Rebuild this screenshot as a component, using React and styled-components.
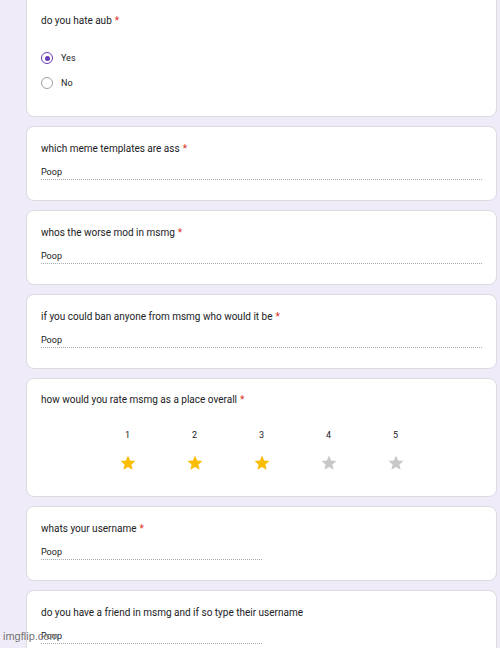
import React from 'react'
import styled, { createGlobalStyle } from 'styled-components'

const GlobalStyle = createGlobalStyle`
html, body {
  margin: 0;
  padding: 0;
  background: #f0ebf8;
  height: 648px;
  overflow: hidden;
}
body {
  font-family: Roboto, "Liberation Sans", sans-serif;
  color: #202124;
}
`

const Page = styled.div`
position: relative;
height: 648px;
overflow: hidden;
`

const CardList = styled.div`
display: flex;
flex-direction: column;
gap: 9px;
margin: -11px 3px 0 26px;
`

const Card = styled.div`
background: #fff;
border: 1px solid #dadce0;
border-radius: 8px;
padding: ${p => p.$padTop || 15}px 14px ${p => p.$padBottom || 20}px 14px;
`

const Title = styled.div`
font-size: 10px;
line-height: 14px;
`

const Required = styled.span`
color: #d93025;
margin-left: 3px;
`

const Answer = styled.div`
margin-top: 10px;
font-size: 9px;
line-height: 12px;
padding-bottom: 1px;
width: ${p => p.$half ? '221px' : '100%'};
border-bottom: 1px dotted #a8a8a8;
`

const Options = styled.div`
display: flex;
flex-direction: column;
gap: 5px;
margin-top: 20px;
`

const Option = styled.div`
display: flex;
align-items: center;
height: 20px;
gap: 8px;
font-size: 9px;
`

const Radio = styled.span`
box-sizing: border-box;
width: 12px;
height: 12px;
border-radius: 50%;
border: 1.5px solid ${p => p.$checked ? '#673ab7' : '#a0a0a0'};
display: flex;
align-items: center;
justify-content: center;
&::after {
  content: '';
  width: 5px;
  height: 5px;
  border-radius: 50%;
  background: ${p => p.$checked ? '#673ab7' : 'transparent'};
}
`

const Rating = styled.div`
display: flex;
justify-content: center;
margin-top: 22px;
`

const RatingCol = styled.div`
width: 67px;
display: flex;
flex-direction: column;
align-items: center;
gap: 13px;
`

const RatingNum = styled.div`
font-size: 9px;
line-height: 12px;
`

const Watermark = styled.div`
position: absolute;
left: 3px;
top: 630px;
font-family: "Liberation Sans", Arial, sans-serif;
font-size: 11px;
color: rgba(70, 70, 70, 0.8);
text-shadow: 0 0 1px #fff;
`

const Star = ({ filled }) => (
  <svg width="18" height="18" viewBox="0 0 24 24">
    <path
      d="M12 17.27L18.18 21l-1.64-7.03L22 9.24l-7.19-.61L12 2 9.19 8.63 2 9.24l5.46 4.73L5.82 21z"
      fill={filled ? '#fbbc04' : '#c8c8c8'}
    />
  </svg>
)

const TextQuestion = ({ title, required, half }) => (
  <Card>
    <Title>
      {title}
      {required && <Required>*</Required>}
    </Title>
    <Answer $half={half}>Poop</Answer>
  </Card>
)

export default function App() {
  return (
    <Page>
      <GlobalStyle />
      <CardList>
        <Card $padTop={24} $padBottom={23}>
          <Title>
            do you hate aub<Required>*</Required>
          </Title>
          <Options>
            <Option>
              <Radio $checked />
              Yes
            </Option>
            <Option>
              <Radio />
              No
            </Option>
          </Options>
        </Card>

        <TextQuestion title="which meme templates are ass" required />
        <TextQuestion title="whos the worse mod in msmg" required />
        <TextQuestion title="if you could ban anyone from msmg who would it be" required />

        <Card $padTop={14} $padBottom={24}>
          <Title>
            how would you rate msmg as a place overall<Required>*</Required>
          </Title>
          <Rating>
            {[1, 2, 3, 4, 5].map(n => (
              <RatingCol key={n}>
                <RatingNum>{n}</RatingNum>
                <Star filled={n <= 3} />
              </RatingCol>
            ))}
          </Rating>
        </Card>

        <TextQuestion title="whats your username" required half />
        <TextQuestion title="do you have a friend in msmg and if so type their username" half />
      </CardList>
      <Watermark>imgflip.com</Watermark>
    </Page>
  )
}
